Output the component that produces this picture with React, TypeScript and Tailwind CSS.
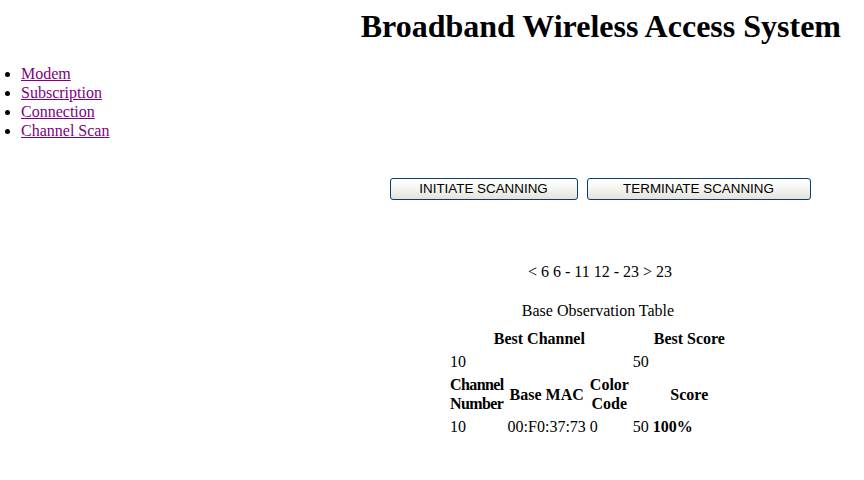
import React from 'react'

const links = ['Modem', 'Subscription', 'Connection', 'Channel Scan']

const ScanButton = ({ label, width }: { label: string; width: string }) => (
  <button
    className={`${width} h-[22px] rounded-[3px] border border-[#0a3d74] bg-gradient-to-b from-white via-[#f4f4f0] to-[#e3e2da] text-[13.4px] text-black font-['Liberation_Sans',Arial,sans-serif] leading-none`}
  >
    {label}
  </button>
)

const App = () => {
  return (
    <div className="w-[864px] h-[480px] bg-white text-black text-[16px] font-['Liberation_Serif','Times_New_Roman',serif]">
      <h1 className="pt-[2px] pr-[23px] text-right text-[32px] font-bold leading-normal">
        Broadband Wireless Access System
      </h1>

      <ul className="mt-[14px] pl-[21px] list-disc leading-[19px]">
        {links.map((name) => (
          <li key={name}>
            <a href="#" className="text-[#800080] underline">
              {name}
            </a>
          </li>
        ))}
      </ul>

      <div className="ml-[336px] w-[528px] flex flex-col items-center">
        <div className="mt-[38px] flex gap-[9px]">
          <ScanButton label="INITIATE SCANNING" width="w-[188px]" />
          <ScanButton label="TERMINATE SCANNING" width="w-[224px]" />
        </div>

        <p className="mt-[60px]">&lt; 6 6 - 11 12 - 23 &gt; 23</p>

        <table className="self-start ml-[111px] mt-[17px] w-[302px] border-separate border-spacing-[2px] leading-[19px]">
          <caption className="pb-[6px]">Base Observation Table</caption>
          <tbody>
            <tr>
              <th colSpan={3} className="p-[1px]">Best Channel</th>
              <th colSpan={2} className="p-[1px]">Best Score</th>
            </tr>
            <tr>
              <td colSpan={3} className="p-[1px]">10</td>
              <td colSpan={2} className="p-[1px]">50</td>
            </tr>
            <tr>
              <th className="p-[1px] w-[53px] text-left tracking-[-0.6px]">Channel Number</th>
              <th className="p-[1px] w-[75px] whitespace-nowrap">Base MAC</th>
              <th className="p-[1px] w-[36px]">Color Code</th>
              <th colSpan={2} className="p-[1px]">Score</th>
            </tr>
            <tr>
              <td className="p-[1px]">10</td>
              <td className="p-[1px]">00:F0:37:73</td>
              <td className="p-[1px]">0</td>
              <td className="p-[1px] w-[16px]">50</td>
              <td className="p-[1px] w-[100px] font-bold">100%</td>
            </tr>
          </tbody>
        </table>
      </div>
    </div>
  )
}

export default App
